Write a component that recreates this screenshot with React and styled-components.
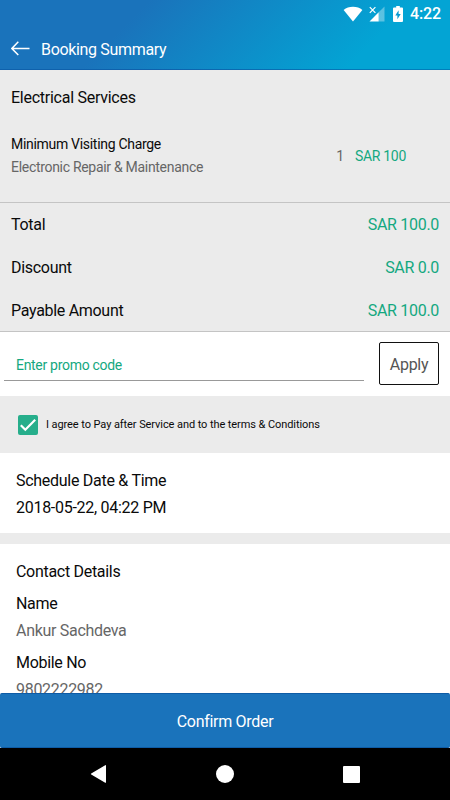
import React, { useState } from "react";
import styled, { createGlobalStyle } from "styled-components";

const totals = [
  { label: "Total", value: "SAR 100.0" },
  { label: "Discount", value: "SAR 0.0" },
  { label: "Payable Amount", value: "SAR 100.0" },
];

function StatusIcons() {
  return (
    <>
      <svg width="20" height="16" viewBox="0 0 20 16">
        <path d="M0.6 3.9C3.2 1.9 6.2 0.8 10 0.8s6.8 1.1 9.4 3.1L10 15.5z" fill="#fff" />
      </svg>
      <svg width="16" height="16" viewBox="0 0 16 16">
        <path d="M15.5 0.5V15.5H9.7V6.3z" fill="#fff" fillOpacity="0.35" />
        <path d="M9.7 6.3V15.5H0.5z" fill="#fff" />
        <path d="M0.8 1.2l5.6 5.6M6.4 1.2L0.8 6.8" stroke="#fff" strokeWidth="1.2" />
      </svg>
      <svg width="10" height="16" viewBox="0 0 10 16">
        <path
          d="M3.2 0h3.6v1.6H9a1 1 0 0 1 1 1V15a1 1 0 0 1-1 1H1a1 1 0 0 1-1-1V2.600a1 1 0 0 1 1-1h2.200z"
          fill="#fff"
        />
        <path d="M5.600 4.200L2.300 9.400h2.100v3.900l3.300-5.400H5.600z" fill="#0899d0" />
      </svg>
    </>
  );
}

function App() {
  const [agree, setAgree] = useState(true);
  const [promo, setPromo] = useState("");

  return (
    <Screen>
      <GlobalStyle />
      <Header>
        <StatusBar>
          <StatusIcons />
          <Clock>4:22</Clock>
        </StatusBar>
        <Toolbar>
          <BackButton aria-label="Back">
            <svg width="19" height="15" viewBox="0 0 19 15">
              <path d="M7.300 0.700L0.900 7.500l6.400 6.500M0.900 7.500H18.500" fill="none" stroke="#fff" strokeWidth="1.500" />
            </svg>
          </BackButton>
          <Title>Booking Summary</Title>
        </Toolbar>
      </Header>
      <Content>
        <ServiceSection>
          <Category>Electrical Services</Category>
          <ServiceRow>
            <div>
              <ServiceName>Minimum Visiting Charge</ServiceName>
              <ServiceType>Electronic Repair &amp; Maintenance</ServiceType>
            </div>
            <Price>
              <span>1</span>
              <Amount $size="14px">SAR 100</Amount>
            </Price>
          </ServiceRow>
        </ServiceSection>
        <Totals>
          {totals.map((item) => (
            <TotalRow key={item.label}>
              <span>{item.label}</span>
              <Amount $size="16px">{item.value}</Amount>
            </TotalRow>
          ))}
        </Totals>
        <PromoRow>
          <PromoInput
            value={promo}
            placeholder="Enter promo code"
            onChange={(e) => {
              setPromo(e?.target?.value);
            }}
          />
          <ApplyButton>Apply</ApplyButton>
        </PromoRow>
        <Agreement onClick={() => setAgree(!agree)}>
          <CheckBox $checked={agree}>
            {agree && (
              <svg width="20" height="20" viewBox="0 0 20 20">
                <path d="M2.800 10.200l4.500 4.500L17.200 4.800" fill="none" stroke="#fff" strokeWidth="2.200" />
              </svg>
            )}
          </CheckBox>
          <span>I agree to Pay after Service and to the terms &amp; Conditions</span>
        </Agreement>
        <Schedule>
          <Line $height="26px">Schedule Date &amp; Time</Line>
          <Line $height="28px">2018-05-22, 04:22 PM</Line>
        </Schedule>
        <Contact>
          <Line $height="32px">Contact Details</Line>
          <Line $height="32px">Name</Line>
          <Line $height="22px" $muted>Ankur Sachdeva</Line>
          <Line $height="42px">Mobile No</Line>
          <Line $height="12px" $muted>9802222982</Line>
        </Contact>
      </Content>
      <ConfirmButton>Confirm Order</ConfirmButton>
      <NavBar>
        <svg width="17" height="20" viewBox="0 0 17 20">
          <path d="M15.200 1.200L1.200 9.600a0.600 0.600 0 0 0 0 1l14 8.200q0.800 0.300 0.800-0.600V1.800q0-0.900-0.800-0.600z" fill="#fff" />
        </svg>
        <svg width="18" height="18" viewBox="0 0 18 18">
          <circle cx="9" cy="9" r="9" fill="#fff" />
        </svg>
        <svg width="17" height="17" viewBox="0 0 17 17">
          <rect width="17" height="17" rx="1" fill="#fff" />
        </svg>
      </NavBar>
    </Screen>
  );
}

export default App;

const GlobalStyle = createGlobalStyle`
  * {
    box-sizing: border-box;
  }
  body {
    margin: 0;
    font-family: Roboto, sans-serif;
  }
  button,
  input {
    font-family: inherit;
    letter-spacing: inherit;
    padding: 0;
    border: 0;
    background: none;
  }
  svg {
    display: block;
    flex-shrink: 0;
  }
`;
const Screen = styled.div`
  width: 450px;
  height: 800px;
  display: flex;
  flex-direction: column;
  overflow: hidden;
  background-color: #fff;
  color: #0a0a0a;
  font-size: 16px;
  letter-spacing: -0.3px;
`;
const Header = styled.header`
  height: 70px;
  flex-shrink: 0;
  color: #fff;
  background: linear-gradient(135deg, #1a73bb 29%, #03a4d4 80%);
  border-bottom: 1px solid rgba(0, 70, 150, 0.4);
`;
const StatusBar = styled.div`
  height: 27px;
  display: flex;
  align-items: center;
  justify-content: flex-end;
  padding-right: 9px;

  svg + svg {
    margin-left: 6px;
  }
  svg:nth-child(3) {
    margin-left: 8px;
  }
`;
const Clock = styled.span`
  font-size: 16px;
  font-weight: 500;
  letter-spacing: -0.1px;
  margin-left: 7px;
`;
const Toolbar = styled.div`
  height: 43px;
  display: flex;
  align-items: center;
  padding-left: 11px;
`;
const BackButton = styled.button`
  width: 30px;
`;
const Title = styled.span`
  font-size: 16px;
  letter-spacing: -0.33px;
  padding-top: 2px;
`;
const Content = styled.main`
  flex: 1;
  min-height: 0;
  overflow: hidden;
`;
const ServiceSection = styled.section`
  height: 133px;
  background-color: #ebebeb;
  border-bottom: 1px solid #c4c4c4;
`;
const Category = styled.div`
  line-height: 56px;
  padding-left: 11px;
  letter-spacing: -0.26px;
`;
const ServiceRow = styled.div`
  display: flex;
  justify-content: space-between;
  padding: 7px 44px 0 11px;
  line-height: 23px;
`;
const ServiceName = styled.div`
  font-size: 14px;
`;
const ServiceType = styled.div`
  font-size: 14px;
  color: #666;
`;
const Price = styled.div`
  display: flex;
  align-items: center;
  gap: 11px;
  font-size: 14px;
  color: #666;
`;
const Amount = styled.span`
  font-size: ${(props) => props.$size};
  color: #14a880;
`;
const Totals = styled.section`
  height: 129px;
  background-color: #ebebeb;
  border-bottom: 1px solid #c4c4c4;
`;
const TotalRow = styled.div`
  height: 43px;
  display: flex;
  align-items: center;
  justify-content: space-between;
  padding: 0 11px;
`;
const PromoRow = styled.div`
  height: 64px;
  display: flex;
  justify-content: space-between;
  padding: 10px 11px 0 4px;
`;
const PromoInput = styled.input`
  width: 360px;
  height: 39px;
  padding: 7px 12px 0;
  font-size: 14px;
  color: #14a880;
  border-bottom: 1px solid #999;
  outline: none;

  &::placeholder {
    color: #14a880;
    opacity: 1;
  }
`;
const ApplyButton = styled.button`
  width: 60px;
  height: 43px;
  padding-top: 2px;
  border: 1px solid #111;
  border-radius: 2px;
  color: #555;
  font-size: 16px;
`;
const Agreement = styled.div`
  height: 57px;
  display: flex;
  align-items: center;
  gap: 8px;
  padding-left: 18px;
  background-color: #ebebeb;
  font-size: 11px;
  letter-spacing: -0.08px;
`;
const CheckBox = styled.div`
  width: 20px;
  height: 20px;
  border-radius: 2px;
  background-color: ${(props) => (props.$checked ? "#26ae8b" : "#fff")};
`;
const Schedule = styled.section`
  height: 91px;
  padding: 15px 16px 0;
  border-bottom: 11px solid #ebebeb;
  letter-spacing: -0.28px;
`;
const Contact = styled.section`
  padding: 12px 16px 0;
`;
const Line = styled.div`
  line-height: ${(props) => props.$height};
  color: ${(props) => (props.$muted ? "#666" : "inherit")};
`;
const ConfirmButton = styled.button`
  height: 55px;
  flex-shrink: 0;
  padding-top: 2px;
  border-top: 1px solid #0e5ca6;
  border-bottom: 1px solid #0e5ca6;
  border-radius: 2px;
  background-color: #1a73bb;
  color: #fff;
  font-size: 16px;
`;
const NavBar = styled.nav`
  height: 52px;
  flex-shrink: 0;
  display: flex;
  align-items: center;
  justify-content: space-between;
  padding: 0 90px;
  background-color: #000;
`;
